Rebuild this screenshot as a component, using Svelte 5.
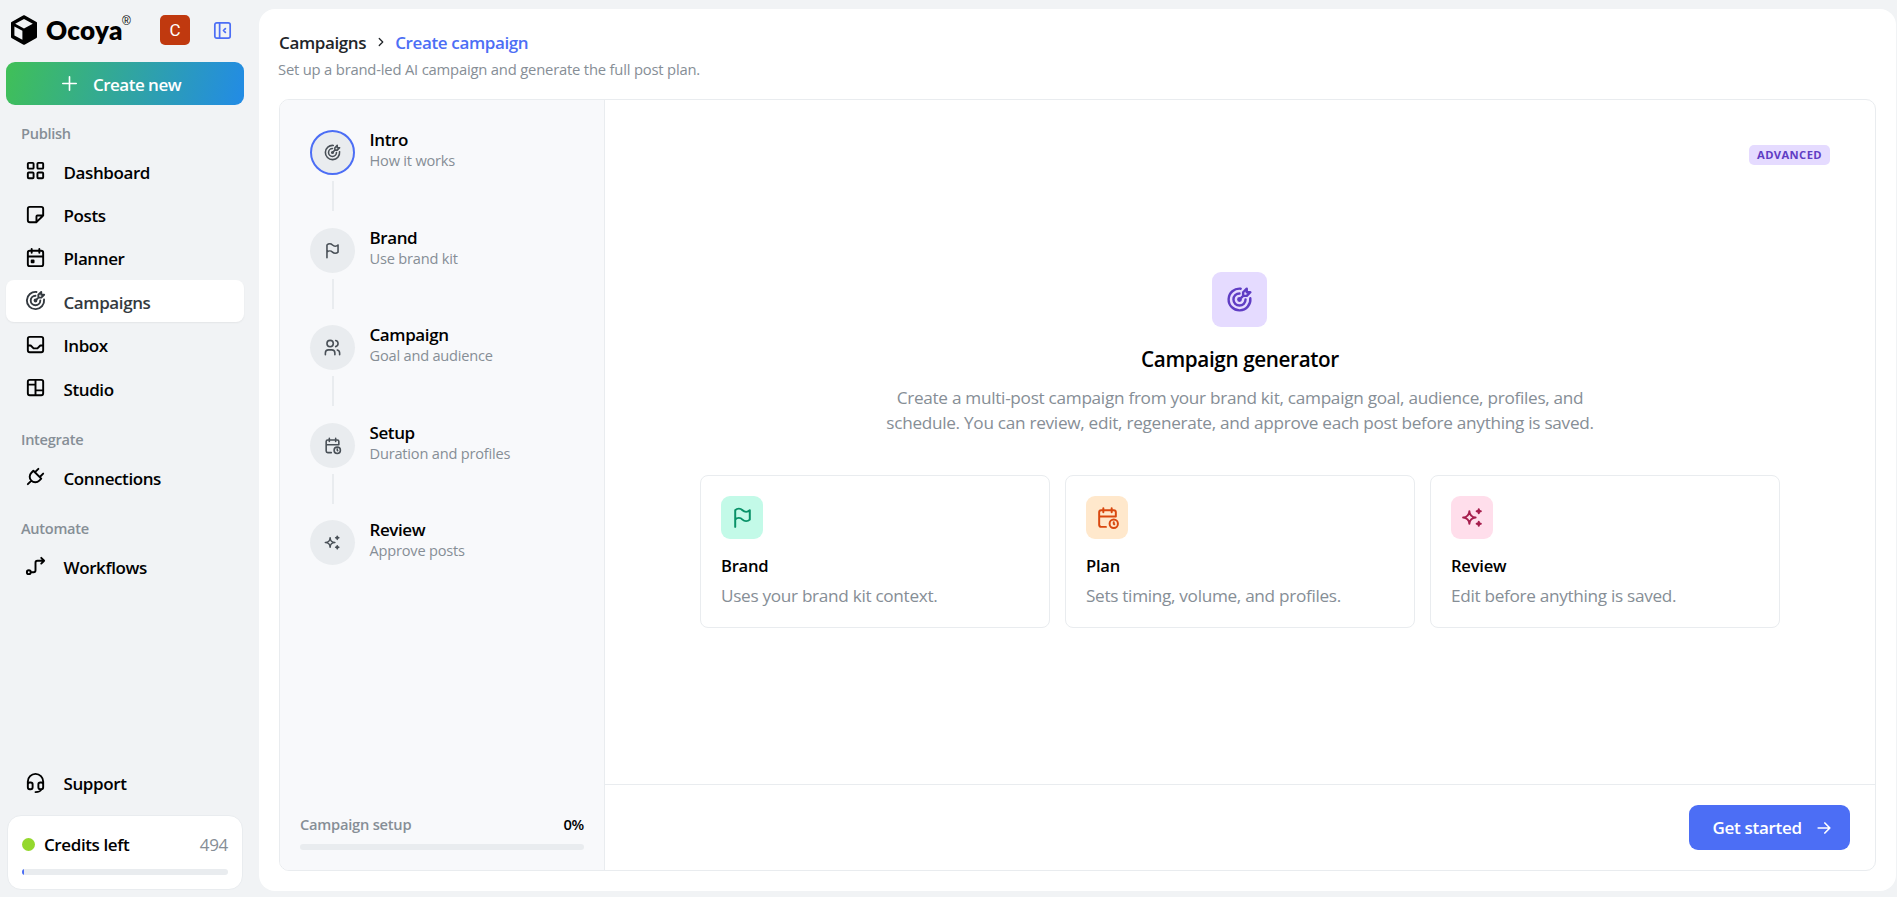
<script>
  const icons = {
    grid: 'M5 4h4a1 1 0 0 1 1 1v4a1 1 0 0 1 -1 1h-4a1 1 0 0 1 -1 -1v-4a1 1 0 0 1 1 -1z M15 4h4a1 1 0 0 1 1 1v4a1 1 0 0 1 -1 1h-4a1 1 0 0 1 -1 -1v-4a1 1 0 0 1 1 -1z M5 14h4a1 1 0 0 1 1 1v4a1 1 0 0 1 -1 1h-4a1 1 0 0 1 -1 -1v-4a1 1 0 0 1 1 -1z M15 14h4a1 1 0 0 1 1 1v4a1 1 0 0 1 -1 1h-4a1 1 0 0 1 -1 -1v-4a1 1 0 0 1 1 -1z',
    note: 'M13 20l7 -7 M13 20v-6a1 1 0 0 1 1 -1h6v-7a2 2 0 0 0 -2 -2h-12a2 2 0 0 0 -2 2v12a2 2 0 0 0 2 2h7',
    calendar: 'M4 7a2 2 0 0 1 2 -2h12a2 2 0 0 1 2 2v12a2 2 0 0 1 -2 2h-12a2 2 0 0 1 -2 -2v-12z M16 3v4 M8 3v4 M4 11h16 M8 15h2v2h-2v-2z',
    target: 'M11 12a1 1 0 1 0 2 0a1 1 0 1 0 -2 0 M12 7a5 5 0 1 0 5 5 M13 3.055a9 9 0 1 0 7.941 7.945 M15 6v3h3l3 -3h-3v-3l-3 3z M15 9l-3 3',
    inbox: 'M6 4h12a2 2 0 0 1 2 2v12a2 2 0 0 1 -2 2h-12a2 2 0 0 1 -2 -2v-12a2 2 0 0 1 2 -2z M4 13h3l3 3h4l3 -3h3',
    studio: 'M6 4h12a2 2 0 0 1 2 2v12a2 2 0 0 1 -2 2h-12a2 2 0 0 1 -2 -2v-12a2 2 0 0 1 2 -2z M12 4v16 M4 9h8 M12 15h8',
    plug: 'M9.785 6l8.215 8.215l-2.054 2.054a5.81 5.81 0 1 1 -8.215 -8.215l2.054 -2.054z M4 20l3.5 -3.5 M15 4l-3.5 3.5 M20 9l-3.5 3.5',
    flow: 'M3 19a2 2 0 1 0 4 0a2 2 0 1 0 -4 0 M7 19h3a2 2 0 0 0 2 -2v-8a2 2 0 0 1 2 -2h7 M18 4l3 3l-3 3',
    headset: 'M4 14v-3a8 8 0 1 1 16 0v3 M18 19c0 1.657 -2.686 3 -6 3 M4 14a2 2 0 0 1 2 -2h1a2 2 0 0 1 2 2v3a2 2 0 0 1 -2 2h-1a2 2 0 0 1 -2 -2v-3z M15 14a2 2 0 0 1 2 -2h1a2 2 0 0 1 2 2v3a2 2 0 0 1 -2 2h-1a2 2 0 0 1 -2 -2v-3z',
    collapse: 'M6 4h12a2 2 0 0 1 2 2v12a2 2 0 0 1 -2 2h-12a2 2 0 0 1 -2 -2v-12a2 2 0 0 1 2 -2z M9 4v16 M15 10l-2 2l2 2',
    plus: 'M12 5v14 M5 12h14',
    chevron: 'M9 6l6 6l-6 6',
    flag: 'M5 5a5 5 0 0 1 7 0a5 5 0 0 0 7 0v9a5 5 0 0 1 -7 0a5 5 0 0 0 -7 0v-9z M5 21v-7',
    users: 'M5 7a4 4 0 1 0 8 0a4 4 0 1 0 -8 0 M3 21v-2a4 4 0 0 1 4 -4h4a4 4 0 0 1 4 4v2 M16 3.13a4 4 0 0 1 0 7.75 M21 21v-2a4 4 0 0 0 -3 -3.85',
    clock: 'M10.5 21h-4.5a2 2 0 0 1 -2 -2v-12a2 2 0 0 1 2 -2h12a2 2 0 0 1 2 2v4 M16 3v4 M8 3v4 M4 11h16 M14 18a4 4 0 1 0 8 0a4 4 0 1 0 -8 0 M18 16.5v1.5l.5 .5',
    sparkles: 'M16 18a2 2 0 0 1 2 2a2 2 0 0 1 2 -2a2 2 0 0 1 -2 -2a2 2 0 0 1 -2 2z M16 6a2 2 0 0 1 2 2a2 2 0 0 1 2 -2a2 2 0 0 1 -2 -2a2 2 0 0 1 -2 2z M9 18a6 6 0 0 1 6 -6a6 6 0 0 1 -6 -6a6 6 0 0 1 -6 6a6 6 0 0 1 6 6z',
    arrow: 'M5 12h14 M13 18l6 -6 M13 6l6 6'
  };

  const groups = [
    {
      label: 'Publish',
      items: [
        { icon: 'grid', label: 'Dashboard' },
        { icon: 'note', label: 'Posts' },
        { icon: 'calendar', label: 'Planner' },
        { icon: 'target', label: 'Campaigns', active: true },
        { icon: 'inbox', label: 'Inbox' },
        { icon: 'studio', label: 'Studio' }
      ]
    },
    { label: 'Integrate', items: [{ icon: 'plug', label: 'Connections' }] },
    { label: 'Automate', items: [{ icon: 'flow', label: 'Workflows' }] }
  ];

  const steps = [
    { icon: 'target', title: 'Intro', text: 'How it works', active: true },
    { icon: 'flag', title: 'Brand', text: 'Use brand kit' },
    { icon: 'users', title: 'Campaign', text: 'Goal and audience' },
    { icon: 'clock', title: 'Setup', text: 'Duration and profiles' },
    { icon: 'sparkles', title: 'Review', text: 'Approve posts' }
  ];

  const cards = [
    { icon: 'flag', tone: 'green', title: 'Brand', text: 'Uses your brand kit context.' },
    { icon: 'clock', tone: 'orange', title: 'Plan', text: 'Sets timing, volume, and profiles.' },
    { icon: 'sparkles', tone: 'pink', title: 'Review', text: 'Edit before anything is saved.' }
  ];
</script>

{#snippet icon(name, size, stroke = 2)}
  <svg class="icon" width={size} height={size} viewBox="0 0 24 24" stroke-width={stroke} aria-hidden="true">
    <path d={icons[name]} />
  </svg>
{/snippet}

<div class="app">
  <aside class="sidebar">
    <div class="top">
      <svg class="cube" width="26" height="30" viewBox="0 0 26 30" aria-hidden="true">
        <path d="M13 1.2 L25 7.9 V22.1 L13 28.8 L1 22.1 V7.9 Z" fill="#000" stroke="#000" stroke-width="2" stroke-linejoin="round" />
        <path d="M13 4 L21.8 8.8 L13 13.6 L4.2 8.8 Z M3.4 11.4 L11.4 15.8 V24.8 L3.4 20.4 Z" fill="#f1f3f5" />
      </svg>
      <span class="wordmark">Ocoya</span><span class="reg">®</span>
      <span class="avatar">C</span>
      <button class="collapse" aria-label="Collapse sidebar">{@render icon('collapse', 23, 1.8)}</button>
    </div>

    <button class="create">{@render icon('plus', 23, 1.7)}<span>Create new</span></button>

    <nav>
      {#each groups as group}
        <div class="group">
          <div class="group-label">{group.label}</div>
          {#each group.items as item}
            <a class="item" class:active={item.active} href="#{item.label.toLowerCase()}">
              {@render icon(item.icon, 23)}<span>{item.label}</span>
            </a>
          {/each}
        </div>
      {/each}
    </nav>

    <a class="item support" href="#support">{@render icon('headset', 23)}<span>Support</span></a>

    <div class="credits">
      <div class="credits-row">
        <i class="dot"></i><span class="credits-label">Credits left</span><span class="credits-value">494</span>
      </div>
      <div class="bar"><div class="bar-fill" style="width: 1%"></div></div>
    </div>
  </aside>

  <main>
    <header>
      <div class="crumbs">
        <span>Campaigns</span>{@render icon('chevron', 14, 2.2)}<span class="current">Create campaign</span>
      </div>
      <p>Set up a brand-led AI campaign and generate the full post plan.</p>
    </header>

    <section class="panel">
      <div class="rail">
        <ol>
          {#each steps as step}
            <li class:active={step.active}>
              <div class="track">
                <div class="circle">{@render icon(step.icon, 19)}</div>
                <div class="line"></div>
              </div>
              <div class="step-text">
                <b>{step.title}</b>
                <small>{step.text}</small>
              </div>
            </li>
          {/each}
        </ol>
        <div class="progress">
          <div class="progress-row"><span>Campaign setup</span><strong>0%</strong></div>
          <div class="bar"></div>
        </div>
      </div>

      <div class="content">
        <div class="stage">
          <div class="badge-row"><span class="badge">ADVANCED</span></div>
          <div class="hero-icon">{@render icon('target', 29)}</div>
          <h1>Campaign generator</h1>
          <p class="lead">
            <span>Create a multi-post campaign from your brand kit, campaign goal, audience, profiles, and</span>
            <span>schedule. You can review, edit, regenerate, and approve each post before anything is saved.</span>
          </p>
          <div class="cards">
            {#each cards as card}
              <article>
                <div class="tile {card.tone}">{@render icon(card.icon, 25, 1.9)}</div>
                <h2>{card.title}</h2>
                <p>{card.text}</p>
              </article>
            {/each}
          </div>
        </div>
        <footer>
          <button class="start"><span>Get started</span>{@render icon('arrow', 20, 2)}</button>
        </footer>
      </div>
    </section>
  </main>
</div>

<style>
  :global(body) {
    margin: 0;
    overflow: hidden;
    background: #f1f3f5;
  }
  .app,
  .app :global(*) {
    box-sizing: border-box;
  }
  .app {
    display: flex;
    width: 100vw;
    height: 100vh;
    padding: 9px 1px 6px 0;
    background: #f1f3f5;
    color: #000;
    font-family: 'Segoe UI', 'Open Sans', 'Noto Sans', sans-serif;
    font-size: 17px;
  }
  button {
    border: 0;
    font: inherit;
  }
  .icon {
    display: block;
    flex: none;
    fill: none;
    stroke: currentColor;
    stroke-linecap: round;
    stroke-linejoin: round;
  }
  span,
  b,
  small,
  p,
  h1,
  h2 {
    white-space: nowrap;
  }

  .sidebar {
    display: flex;
    flex-direction: column;
    flex: none;
    width: 259px;
    padding: 0 15px 1px 6px;
  }
  .top {
    display: flex;
    align-items: center;
    height: 42px;
    padding: 0 10px 0 5px;
  }
  .cube {
    flex: none;
  }
  .wordmark {
    width: 76px;
    margin-left: 9px;
    font-family: Lato, sans-serif;
    font-weight: 800;
    font-size: 26px;
    line-height: 30px;
    letter-spacing: 0.3px;
  }
  .reg {
    width: 10px;
    margin-top: -18px;
    font-family: 'Liberation Sans', sans-serif;
    font-size: 12px;
    line-height: 12px;
  }
  .avatar {
    display: grid;
    place-items: center;
    width: 30px;
    height: 30px;
    margin: -10px 0 -10px 28px;
    border-radius: 5px;
    background: #c0390f;
    color: #fff;
    font-family: Roboto, sans-serif;
    font-size: 17px;
  }
  .collapse {
    margin-left: auto;
    padding: 0;
    background: none;
    color: #4c6ef5;
  }
  .create {
    display: flex;
    align-items: center;
    justify-content: center;
    flex: none;
    gap: 12px;
    height: 43px;
    margin-top: 11px;
    padding: 0 11px 0 0;
    border-radius: 9px;
    background: linear-gradient(105deg, #40c057, #228be6);
    color: #fff;
    font-weight: 570;
  }
  .create span {
    padding-top: 2px;
    letter-spacing: -0.5px;
  }
  .group {
    display: flex;
    flex-direction: column;
    gap: 2px;
    margin-bottom: 2.6px;
  }
  .group-label {
    height: 43px;
    padding: 16px 15px 0;
    color: #868e96;
    font-size: 14.6px;
    font-weight: 570;
    line-height: 24px;
    letter-spacing: -0.3px;
  }
  .item {
    display: flex;
    align-items: center;
    flex: none;
    gap: 16.5px;
    height: 41.4px;
    padding: 0 17.5px 0 18px;
    border-radius: 8px;
    color: #000;
    font-weight: 570;
    text-decoration: none;
    letter-spacing: -0.4px;
  }
  .item span {
    margin-top: 3px;
  }
  .item.active {
    background: #fff;
    color: #343a40;
    box-shadow: 0 1px 2px rgba(0, 0, 0, 0.06);
  }
  .support {
    margin-top: auto;
    margin-bottom: 12px;
  }
  .credits {
    flex: none;
    height: 75px;
    margin: 0 1px;
    padding: 16px 14px 0 14px;
    border: 1px solid #e9ecef;
    border-radius: 14px;
    background: #fff;
  }
  .credits-row {
    display: flex;
    align-items: center;
    height: 24px;
  }
  .dot {
    width: 13px;
    height: 13px;
    margin-right: 9px;
    border-radius: 50%;
    background: #94d82d;
  }
  .credits-label {
    font-weight: 570;
    letter-spacing: -0.4px;
  }
  .credits-value {
    margin-left: auto;
    color: #868e96;
    letter-spacing: -0.3px;
  }
  .bar {
    height: 6px;
    overflow: hidden;
    border-radius: 3px;
    background: #e9ecef;
  }
  .credits .bar {
    margin-top: 13px;
  }
  .bar-fill {
    height: 100%;
    background: #4c6ef5;
  }

  main {
    display: flex;
    flex: 1;
    flex-direction: column;
    min-width: 0;
    padding: 19px 20px 20px;
    border-radius: 16px;
    background: #fff;
  }
  header {
    height: 71px;
  }
  .crumbs {
    display: flex;
    align-items: center;
    height: 28px;
    color: #212529;
    font-weight: 570;
    letter-spacing: -0.37px;
  }
  .crumbs .icon {
    margin: 0 7px 0 8px;
  }
  .current {
    color: #4c6ef5;
  }
  header p {
    margin: 0 0 0 -1px;
    color: #868e96;
    font-size: 14.8px;
    line-height: 26px;
    letter-spacing: -0.2px;
  }
  .panel {
    display: flex;
    flex: 1;
    overflow: hidden;
    border: 1px solid #e9ecef;
    border-radius: 10px;
  }
  .rail {
    display: flex;
    flex-direction: column;
    justify-content: space-between;
    flex: none;
    width: 325px;
    padding: 30px 20px 20px;
    border-right: 1px solid #e9ecef;
    background: #f8f9fb;
  }
  ol {
    margin: 0;
    padding: 0 0 0 10px;
    list-style: none;
  }
  li {
    display: flex;
    gap: 14.5px;
    height: 97.5px;
  }
  .track {
    display: flex;
    flex-direction: column;
    align-items: center;
    gap: 6px;
  }
  .circle {
    display: grid;
    place-items: center;
    width: 45px;
    height: 45px;
    border-radius: 50%;
    background: #e9ecef;
    color: #495057;
  }
  .active .circle {
    border: 2px solid #4c6ef5;
  }
  .line {
    width: 2px;
    height: 30px;
    background: #e9ecef;
  }
  li:last-child .line {
    display: none;
  }
  .step-text {
    display: flex;
    flex-direction: column;
  }
  .step-text b {
    font-weight: 570;
    line-height: 20px;
    letter-spacing: -0.4px;
  }
  .step-text small {
    color: #868e96;
    font-size: 14.6px;
    line-height: 21px;
    letter-spacing: -0.2px;
  }
  .progress-row {
    display: flex;
    justify-content: space-between;
    margin-bottom: 9px;
    font-size: 14.7px;
    font-weight: 570;
    line-height: 22px;
    letter-spacing: -0.25px;
    color: #868e96;
  }
  .progress-row strong {
    color: #000;
    font-weight: 570;
  }

  .content {
    display: flex;
    flex: 1;
    flex-direction: column;
  }
  .stage {
    display: flex;
    flex: 1;
    flex-direction: column;
    align-items: center;
    padding: 45px 45px 0;
  }
  .badge-row {
    display: flex;
    justify-content: flex-end;
    align-self: stretch;
  }
  .badge {
    width: 81px;
    height: 20px;
    border-radius: 5px;
    background: #e5dbff;
    color: #5f3dc4;
    font-size: 11.2px;
    font-weight: 700;
    line-height: 20px;
    letter-spacing: 0.4px;
    text-align: center;
  }
  .hero-icon {
    display: grid;
    place-items: center;
    width: 55px;
    height: 55px;
    margin-top: 107px;
    margin-right: 1px;
    border-radius: 9px;
    background: #e5dbff;
    color: #5f3dc4;
  }
  h1 {
    margin: 18px 0 0;
    font-size: 20.7px;
    font-weight: 570;
    line-height: 28px;
    letter-spacing: -0.38px;
  }
  .lead {
    display: flex;
    flex-direction: column;
    align-items: center;
    margin: 12px 0 0;
    color: #868e96;
    font-size: 17.2px;
    line-height: 25.4px;
    letter-spacing: -0.29px;
  }
  .cards {
    display: grid;
    grid-template-columns: repeat(3, 350px);
    gap: 15px;
    margin-top: 39px;
  }
  article {
    height: 153px;
    padding: 20px;
    border: 1px solid #e9ecef;
    border-radius: 8px;
  }
  .tile {
    display: grid;
    place-items: center;
    width: 42px;
    height: 43px;
    border-radius: 9px;
  }
  .green {
    background: #c3fae8;
    color: #099268;
  }
  .orange {
    background: #ffe8cc;
    color: #d9480f;
  }
  .pink {
    background: #ffdeeb;
    color: #a61e4d;
  }
  h2 {
    margin: 14px 0 0;
    font-size: 16.6px;
    font-weight: 570;
    line-height: 25px;
    letter-spacing: -0.25px;
  }
  article p {
    margin: 5px 0 0;
    color: #868e96;
    font-size: 17.2px;
    line-height: 26px;
    letter-spacing: -0.31px;
  }
  footer {
    display: flex;
    justify-content: flex-end;
    height: 86px;
    padding: 20px 25px 0;
    border-top: 1px solid #e9ecef;
  }
  .start {
    display: flex;
    align-items: center;
    justify-content: space-between;
    width: 161px;
    height: 45px;
    padding: 0 16px 0 23.5px;
    border-radius: 9px;
    background: #4c6ef5;
    color: #fff;
    font-weight: 570;
    letter-spacing: -0.3px;
  }
</style>
